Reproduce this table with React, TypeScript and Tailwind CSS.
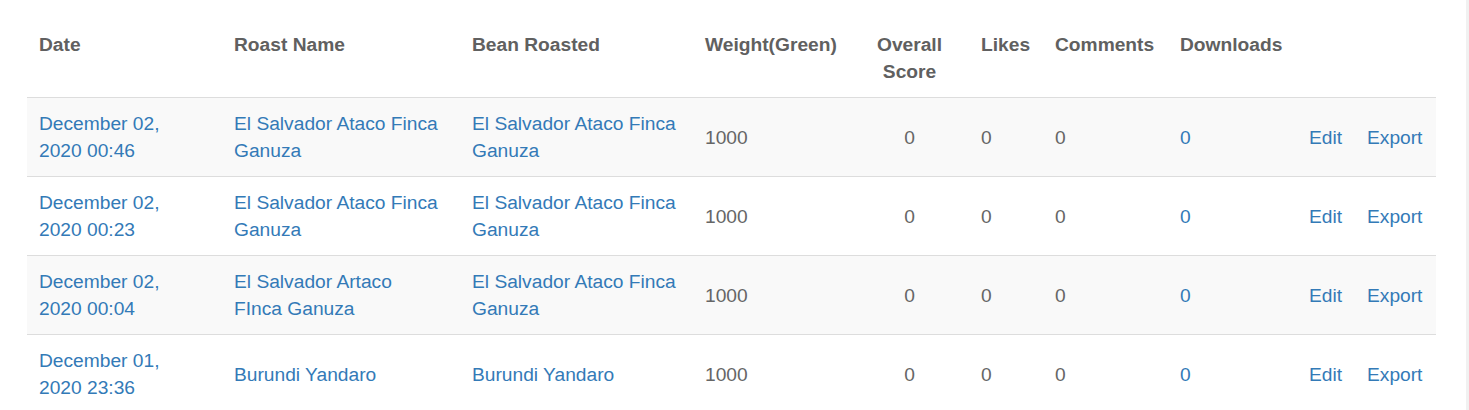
const roasts = [
  {
    date: "December 02, 2020 00:46",
    name: "El Salvador Ataco Finca Ganuza",
    bean: "El Salvador Ataco Finca Ganuza",
  },
  {
    date: "December 02, 2020 00:23",
    name: "El Salvador Ataco Finca Ganuza",
    bean: "El Salvador Ataco Finca Ganuza",
  },
  {
    date: "December 02, 2020 00:04",
    name: "El Salvador Artaco FInca Ganuza",
    bean: "El Salvador Ataco Finca Ganuza",
  },
  {
    date: "December 01, 2020 23:36",
    name: "Burundi Yandaro",
    bean: "Burundi Yandaro",
  },
];

const link = "text-[#337ab7] hover:underline cursor-pointer";

const App: React.FC = (): JSX.Element => {
  return (
    <div
      className="flex h-[410px] overflow-hidden bg-white text-[19.2px] leading-[27px] text-[#666]"
      style={{ fontFamily: '"Liberation Sans", Arial, sans-serif' }}
    >
      <div className="flex-1 pl-[27px] pr-[30px] pt-[19px]">
        <table className="w-[1409px] table-fixed border-collapse">
          <colgroup>
            <col className="w-[195px]" />
            <col className="w-[238px]" />
            <col className="w-[233px]" />
            <col className="w-[157px]" />
            <col className="w-[119px]" />
            <col className="w-[74px]" />
            <col className="w-[125px]" />
            <col className="w-[129px]" />
            <col className="w-[58px]" />
            <col className="w-[81px]" />
          </colgroup>
          <thead>
            <tr className="border-b border-[#dddddd] text-left align-top font-bold text-[#606060]">
              <th className="pl-3 pr-4 py-3">Date</th>
              <th className="pl-3 pr-4 py-3">Roast Name</th>
              <th className="p-3">Bean Roasted</th>
              <th className="p-3">Weight(Green)</th>
              <th className="p-3 text-center">Overall Score</th>
              <th className="p-3">Likes</th>
              <th className="p-3">Comments</th>
              <th className="p-3">Downloads</th>
              <th className="p-3"></th>
              <th className="p-3"></th>
            </tr>
          </thead>
          <tbody>
            {roasts.map((row, idx) => (
              <tr
                key={idx + "roast"}
                className={`border-b border-[#dddddd] align-middle ${
                  idx % 2 === 0 ? "bg-[#f9f9f9]" : "bg-white"
                }`}
              >
                <td className="pl-3 pr-4 py-3">
                  <span className={link}>{row.date}</span>
                </td>
                <td className="pl-3 pr-4 py-3">
                  <span className={link}>{row.name}</span>
                </td>
                <td className="p-3">
                  <span className={link}>{row.bean}</span>
                </td>
                <td className="p-3">1000</td>
                <td className="p-3 text-center">0</td>
                <td className="p-3">0</td>
                <td className="p-3">0</td>
                <td className="p-3">
                  <span className={link}>0</span>
                </td>
                <td className="p-3">
                  <span className={link}>Edit</span>
                </td>
                <td className="p-3">
                  <span className={link}>Export</span>
                </td>
              </tr>
            ))}
          </tbody>
        </table>
      </div>
      <div className="w-[3px] shrink-0 bg-[#f1f1f1]" />
    </div>
  );
};

export default App;
